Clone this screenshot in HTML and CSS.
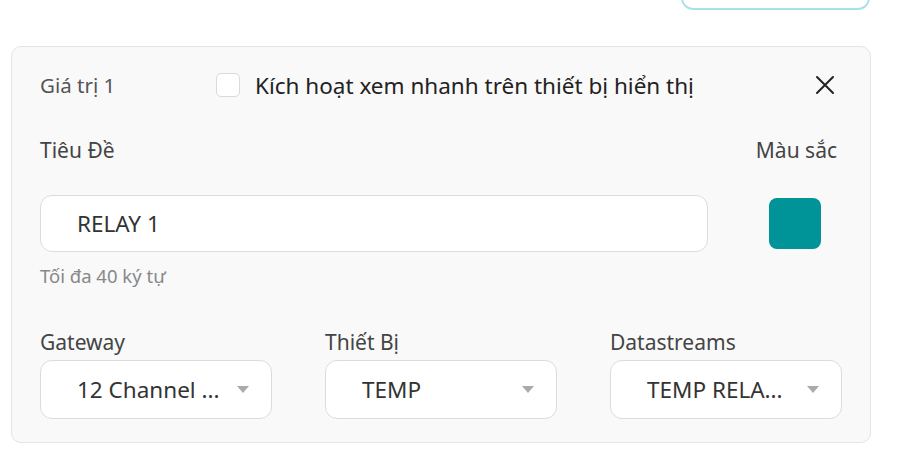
FILE: index.html
```html
<!DOCTYPE html>
<html lang="vi">

<head>
    <meta charset="UTF-8" />
    <meta name="viewport" content="width=device-width, initial-scale=1.0" />
    <title>Giá trị 1</title>
    <link rel="stylesheet" href="styles.css">
</head>

<body class="page">

    <div class="top-bar">
        <button type="button" class="top-bttn"></button>
    </div>

    <section class="value-card">
        <div class="card-head">
            <span class="card-name">Giá trị 1</span>
            <label class="quick-view">
                <input type="checkbox" class="quick-check" />
                <span class="quick-text">Kích hoạt xem nhanh trên thiết bị hiển thị</span>
            </label>
            <button type="button" class="close-bttn" aria-label="close">
                <svg width="22" height="22" viewBox="0 0 22 22">
                    <path d="M3 3 L19 19 M19 3 L3 19" stroke="#222" stroke-width="2" stroke-linecap="round" fill="none" />
                </svg>
            </button>
        </div>

        <div class="title-head">
            <span class="field-label">Tiêu Đề</span>
            <span class="field-label">Màu sắc</span>
        </div>

        <div class="title-row">
            <input type="text" class="title-inp" value="RELAY 1" maxlength="40" />
            <div class="color-swatch"></div>
        </div>
        <p class="hint">Tối đa 40 ký tự</p>

        <div class="select-grid">
            <div class="select-col">
                <span class="field-label">Gateway</span>
                <div class="select-box">
                    <span class="select-val">12 Channel ...</span>
                    <span class="select-arrow"></span>
                </div>
            </div>
            <div class="select-col">
                <span class="field-label">Thiết Bị</span>
                <div class="select-box">
                    <span class="select-val">TEMP</span>
                    <span class="select-arrow"></span>
                </div>
            </div>
            <div class="select-col">
                <span class="field-label">Datastreams</span>
                <div class="select-box">
                    <span class="select-val">TEMP RELA...</span>
                    <span class="select-arrow"></span>
                </div>
            </div>
        </div>
    </section>

</body>

</html>
```

FILE: styles.css
```css
.page {
    margin: 0;
    background-color: rgb(255, 255, 255);
    font-family: "Noto Sans", "Open Sans", sans-serif;
    color: rgb(34, 34, 34);
}

.top-bar {
    height: 46px;
    display: flex;
    justify-content: flex-end;
    padding-right: 34px;
    overflow: hidden;
}

.top-bttn {
    width: 189px;
    height: 40px;
    margin-top: -30px;
    border: 2px solid rgb(168, 226, 233);
    border-radius: 12px;
    background-color: rgb(255, 255, 255);
}

.value-card {
    margin: 0 33px 0 11px;
    padding: 25px 29px 23px 28px;
    border: 1px solid rgb(228, 228, 228);
    border-radius: 10px;
    background-color: rgb(249, 249, 249);
}

.card-head {
    display: flex;
    align-items: center;
    height: 26px;
}

.card-name {
    width: 176px;
    font-size: 20.5px;
    color: rgb(85, 85, 85);
}

.quick-view {
    display: flex;
    align-items: center;
    flex: 1;
}

.quick-check {
    appearance: none;
    width: 24px;
    height: 24px;
    margin: 0 15px 0 0;
    border: 1px solid rgb(218, 218, 218);
    border-radius: 5px;
    background-color: rgb(255, 255, 255);
}

.quick-text {
    font-size: 22.5px;
    color: rgb(34, 34, 34);
}

.close-bttn {
    display: flex;
    margin-right: 5px;
    padding: 0;
    border: 0;
    background: none;
}

.title-head {
    display: flex;
    justify-content: space-between;
    margin-top: 40px;
    padding-right: 4px;
}

.field-label {
    font-size: 21px;
    line-height: 24px;
    color: rgb(68, 68, 68);
}

.title-row {
    display: flex;
    align-items: center;
    margin-top: 33px;
}

.title-inp {
    box-sizing: border-box;
    width: 668px;
    height: 57px;
    padding: 0 36px;
    border: 1px solid rgb(220, 220, 220);
    border-radius: 12px;
    background-color: rgb(255, 255, 255);
    font-family: inherit;
    font-size: 22.5px;
    color: rgb(51, 51, 51);
    outline: none;
}

.color-swatch {
    width: 52px;
    height: 51px;
    margin-left: 61px;
    border-radius: 8px;
    background-color: rgb(0, 148, 153);
}

.hint {
    margin: 14px 0 0 0;
    font-size: 18.5px;
    line-height: 20px;
    color: rgb(136, 136, 136);
}

.select-grid {
    display: grid;
    grid-template-columns: repeat(3, 232px);
    column-gap: 53px;
    margin-top: 44px;
}

.select-col {
    display: flex;
    flex-direction: column;
    gap: 6px;
}

.select-box {
    box-sizing: border-box;
    height: 59px;
    display: flex;
    align-items: center;
    justify-content: space-between;
    padding: 0 22px 0 36px;
    border: 1px solid rgb(220, 220, 220);
    border-radius: 12px;
    background-color: rgb(255, 255, 255);
}

.select-val {
    font-size: 22.5px;
    color: rgb(51, 51, 51);
}

.select-arrow {
    width: 0;
    height: 0;
    border-left: 6px solid transparent;
    border-right: 6px solid transparent;
    border-top: 7px solid rgb(170, 170, 170);
}
```
